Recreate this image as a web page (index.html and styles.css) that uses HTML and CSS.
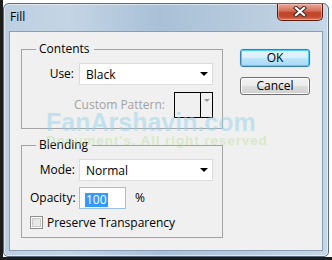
FILE: index.html
```html
<!DOCTYPE html>
<html>
<head>
<meta charset="utf-8">
<link rel="stylesheet" href="styles.css">
</head>
<body>
<div class="screen">
  <div class="window">
    <div class="titlebar">
      <span class="title">Fill</span>
      <button class="close" aria-label="Close">
        <svg width="14" height="11" viewBox="0 0 14 11">
          <path d="M3 2 L11 9 M11 2 L3 9" stroke="#3a2a28" stroke-width="4.2" stroke-linecap="square" fill="none"/>
          <path d="M3 2 L11 9 M11 2 L3 9" stroke="#ffffff" stroke-width="2.2" stroke-linecap="square" fill="none"/>
        </svg>
      </button>
    </div>
    <div class="client">
      <div class="groups">
        <fieldset class="group group-contents">
          <legend>Contents</legend>
          <div class="group-body contents-body">
            <div class="row-end">
              <label class="lbl">Use:</label>
              <div class="select"><span>Black</span><span class="arrow"></span></div>
            </div>
            <div class="row-end pattern-row">
              <label class="lbl disabled">Custom Pattern:</label>
              <div class="pattern"><span class="swatch"></span><span class="pattern-drop"><span class="arrow grey"></span></span></div>
            </div>
          </div>
        </fieldset>
        <fieldset class="group group-blending">
          <legend>Blending</legend>
          <div class="group-body blend-body">
            <label class="lbl col1">Mode:</label>
            <div class="select"><span>Normal</span><span class="arrow"></span></div>
            <label class="lbl col1">Opacity:</label>
            <div class="opacity-row">
              <div class="input"><span class="sel">100</span></div>
              <span class="pct">%</span>
            </div>
            <div class="check-row">
              <span class="checkbox"></span>
              <span>Preserve Transparency</span>
            </div>
          </div>
        </fieldset>
      </div>
      <div class="buttons">
        <button class="btn default">OK</button>
        <button class="btn">Cancel</button>
      </div>
      <div class="watermark">
        <div class="wm1">FanArshavin.com</div>
        <div class="wm2">Document's. All right reserved</div>
      </div>
    </div>
  </div>
</div>
</body>
</html>
```

FILE: styles.css
```css
* { box-sizing: border-box; }
html, body { margin: 0; padding: 0; }
body {
  background: #ffffff;
  font-family: "Open Sans", "Noto Sans", sans-serif;
  font-size: 12px;
  color: #000;
}
.screen {
  width: 332px;
  height: 260px;
  border-left: 3px solid #1c1c1c;
  border-bottom: 3px solid #1c1c1c;
  padding-top: 3px;
  background: #ffffff;
}
.window {
  width: 326px;
  height: 254px;
  border: 1px solid #5a6b7c;
  border-radius: 6px 6px 5px 5px;
  background: linear-gradient(90deg, #bccfe1 0%, #c4d5e5 20%, #a9c0d7 48%, #b5c9dc 70%, #c6d7e7 100%);
  padding: 0 5px 5px 5px;
  display: flex;
  flex-direction: column;
  box-shadow: inset 0 0 0 1px rgba(255,255,255,0.55);
}
.titlebar {
  height: 27px;
  display: flex;
  justify-content: space-between;
  align-items: flex-start;
}
.title {
  padding-top: 5px;
  padding-left: 1px;
  font-size: 12px;
  line-height: 16px;
  color: #000;
}
.close {
  width: 46px;
  height: 17px;
  margin: 0;
  padding: 0;
  border: 1px solid #5b1d12;
  border-top: none;
  border-radius: 0 0 5px 5px;
  background: linear-gradient(180deg, #e9a99a 0%, #d7735d 40%, #c2452a 55%, #c24a2e 80%, #dc7a5c 100%);
  box-shadow: inset 0 0 0 1px rgba(255,210,200,0.45);
  display: flex;
  align-items: center;
  justify-content: center;
}
.close svg { display: block; margin-top: -1px; }
.client {
  flex: 1;
  position: relative;
  background: #f0f0f0;
  border: 1px solid #8a9db2;
  display: flex;
  padding: 10px 0 0 11px;
}
.groups {
  display: flex;
  flex-direction: column;
  gap: 9px;
  width: 202px;
}
.group {
  margin: 0;
  padding: 0;
  border: 1px solid #a3a3a3;
  min-width: 0;
}
.group legend {
  margin-left: 14px;
  padding: 0 4px 0 3px;
  font-size: 12px;
  line-height: 14px;
}
.contents-body {
  padding: 7px 9px 10px 9px;
  display: flex;
  flex-direction: column;
  gap: 7px;
}
.row-end {
  display: flex;
  justify-content: flex-end;
  align-items: center;
  gap: 5px;
}
.pattern-row { gap: 9px; }
.lbl { line-height: 16px; white-space: nowrap; }
.disabled { color: #a2a2a2; }
.select {
  width: 134px;
  height: 22px;
  background: #fff;
  border: 1px solid #dcdcdc;
  display: flex;
  align-items: center;
  justify-content: space-between;
  padding: 0 4px 0 6px;
}
.arrow {
  width: 0;
  height: 0;
  border-left: 4px solid transparent;
  border-right: 4px solid transparent;
  border-top: 4px solid #000;
}
.arrow.grey { border-left-width: 3px; border-right-width: 3px; border-top: 3px solid #9a9a9a; }
.pattern {
  width: 39px;
  height: 26px;
  border: 1px solid #000;
  display: flex;
}
.swatch { flex: 1; border-right: 1px solid #000; }
.pattern-drop {
  width: 11px;
  display: flex;
  align-items: flex-start;
  justify-content: center;
  padding-top: 6px;
}
.blend-body {
  padding: 7px 9px 8px 8px;
  display: grid;
  grid-template-columns: 45px 134px;
  column-gap: 4px;
  row-gap: 6px;
  align-items: center;
}
.col1 { text-align: right; }
.opacity-row { display: flex; align-items: center; gap: 9px; }
.input {
  width: 47px;
  height: 22px;
  background: #fff;
  border: 1px solid #9cc1e6;
  padding: 3px 0 0 5px;
}
.sel {
  display: inline-block;
  background: #3399ff;
  color: #fff;
  line-height: 14px;
  padding: 0 1px;
}
.pct { line-height: 16px; }
.check-row {
  grid-column: 1 / 3;
  display: flex;
  align-items: center;
  gap: 4px;
  height: 14px;
}
.checkbox {
  width: 13px;
  height: 13px;
  border: 1px solid #8e8f8f;
  background: linear-gradient(135deg, #dcdcdc 0%, #f4f4f4 100%);
  box-shadow: inset 0 0 0 1px #fafafa, inset 0 0 0 2px #c9c9c9;
}
.buttons {
  display: flex;
  flex-direction: column;
  gap: 10px;
  margin-left: 17px;
  margin-top: 7px;
}
.btn {
  width: 70px;
  height: 18px;
  margin: 0;
  padding: 0;
  font-family: inherit;
  font-size: 12px;
  line-height: 14px;
  color: #000;
  border: 1px solid #707070;
  border-radius: 3px;
  background: linear-gradient(180deg, #f2f2f2 0%, #ebebeb 50%, #dddddd 51%, #cfcfcf 100%);
  box-shadow: inset 0 0 0 1px #fcfcfc;
}
.btn.default {
  border-color: #3c7fb1;
  background: linear-gradient(180deg, #e8f6fd 0%, #d8eefb 50%, #bee6fd 51%, #a7d9f5 100%);
  box-shadow: inset 0 0 0 1px #48d1f8, 0 0 1px #6fc3ef;
}
.watermark {
  position: absolute;
  left: 36px;
  top: 77px;
  pointer-events: none;
}
.wm1 {
  font-family: "Liberation Sans", Arial, sans-serif;
  font-weight: bold;
  font-size: 25px;
  line-height: 26px;
  color: rgba(150, 210, 235, 0.5);
}
.wm2 {
  font-family: "Liberation Sans", Arial, sans-serif;
  font-weight: bold;
  font-size: 13.5px;
  line-height: 14px;
  color: rgba(185, 225, 150, 0.45);
  letter-spacing: 0.9px;
  margin-top: -1px;
}
```
